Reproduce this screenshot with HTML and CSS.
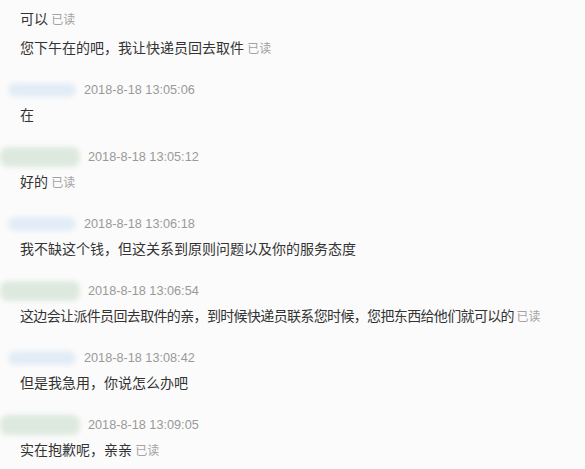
FILE: index.html
```html
<!DOCTYPE html>
<html lang="zh">
<head>
    <meta charset="UTF-8">
    <title>聊天记录</title>
    <link rel="stylesheet" href="styles.css">
</head>
<body>
    <div class="chat">
        <div class="group">
            <div class="line">可以 <span class="read">已读</span></div>
            <div class="line gap">您下午在的吧，我让快递员回去取件 <span class="read">已读</span></div>
        </div>

        <div class="group">
            <div class="head"><span class="name buyer"></span><span class="time">2018-8-18 13:05:06</span></div>
            <div class="line">在</div>
        </div>

        <div class="group">
            <div class="head"><span class="name seller"></span><span class="time">2018-8-18 13:05:12</span></div>
            <div class="line">好的 <span class="read">已读</span></div>
        </div>

        <div class="group">
            <div class="head"><span class="name buyer"></span><span class="time">2018-8-18 13:06:18</span></div>
            <div class="line">我不缺这个钱，但这关系到原则问题以及你的服务态度</div>
        </div>

        <div class="group">
            <div class="head"><span class="name seller"></span><span class="time">2018-8-18 13:06:54</span></div>
            <div class="line tight">这边会让派件员回去取件的亲，到时候快递员联系您时候，您把东西给他们就可以的 <span class="read">已读</span></div>
        </div>

        <div class="group">
            <div class="head"><span class="name buyer"></span><span class="time">2018-8-18 13:08:42</span></div>
            <div class="line">但是我急用，你说怎么办吧</div>
        </div>

        <div class="group">
            <div class="head"><span class="name seller"></span><span class="time">2018-8-18 13:09:05</span></div>
            <div class="line">实在抱歉呢，亲亲 <span class="read">已读</span></div>
        </div>
    </div>
</body>
</html>
```

FILE: styles.css
```css
body {
    margin: 0;
    background-color: #fbfbfb;
    font-family: "Noto Sans CJK SC", "Liberation Sans", sans-serif;
    color: #333;
    overflow: hidden;
}
.chat {
    padding-top: 6px;
}
.group {
    margin-bottom: 19px;
}
.line {
    height: 24px;
    line-height: 24px;
    padding-left: 20px;
    font-size: 14px;
    white-space: nowrap;
}
.line.gap {
    margin-top: 5px;
}
.line.tight {
    letter-spacing: -0.65px;
}
.read {
    font-size: 12px;
    letter-spacing: 0;
    color: #a3a3a3;
}
.head {
    display: flex;
    align-items: center;
    height: 24px;
}
.name {
    display: block;
    border-radius: 8px;
    filter: blur(2.5px);
}
.name.buyer {
    width: 68px;
    height: 14px;
    margin-left: 8px;
    margin-right: 8px;
    background-color: #e2ecf6;
}
.name.seller {
    width: 80px;
    height: 20px;
    margin-left: 0;
    margin-right: 8px;
    background-color: #dde9de;
}
.time {
    font-family: "Liberation Sans", sans-serif;
    font-size: 12.7px;
    color: #999;
}
```
